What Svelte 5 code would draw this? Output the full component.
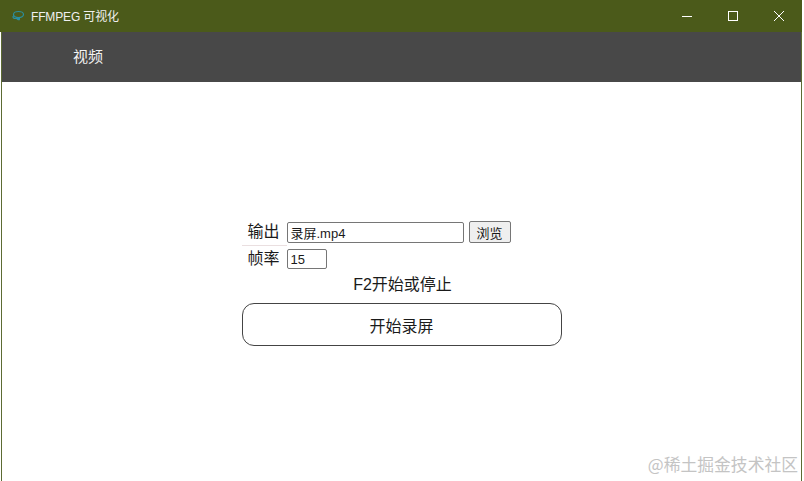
<script>
	let output = '录屏.mp4';
	let fps = '15';
</script>

<div class="page">
	<div class="window">
		<header class="titlebar">
			<svg class="logo" width="14" height="12" viewBox="0 0 14 12" fill="none" stroke="#2a8fa0" stroke-width="1.2">
				<ellipse cx="7.5" cy="4.5" rx="5" ry="3" />
				<path d="M3 5.5C1 7 2 8.5 5 8.5h4M6 8.5c0 1 1 1.5 3 1" />
			</svg>
			<span class="title">FFMPEG 可视化</span>
			<div class="controls">
				<button class="ctl" aria-label="最小化">
					<svg width="12" height="12" viewBox="0 0 12 12"><path d="M1 6.5h10" stroke="#fff" /></svg>
				</button>
				<button class="ctl" aria-label="最大化">
					<svg width="12" height="12" viewBox="0 0 12 12"><rect x="1.5" y="1.5" width="9" height="9" fill="none" stroke="#fff" /></svg>
				</button>
				<button class="ctl" aria-label="关闭">
					<svg width="12" height="12" viewBox="0 0 12 12"><path d="M1 1l10 10M11 1L1 11" stroke="#fff" /></svg>
				</button>
			</div>
		</header>

		<nav class="menu"><span>视频</span></nav>

		<main class="content">
			<div class="form">
				<div class="row">
					<label for="output" class="first">输出</label>
					<input id="output" class="path" type="text" bind:value={output} />
					<button class="browse">浏览</button>
				</div>
				<div class="row second">
					<label for="fps">帧率</label>
					<input id="fps" class="fps" type="text" bind:value={fps} />
				</div>
				<p class="hint">F2开始或停止</p>
				<button class="start">开始录屏</button>
			</div>
		</main>

		<div class="watermark">@稀土掘金技术社区</div>
	</div>
</div>

<style>
	:global(body) {
		margin: 0;
		background: #fff;
	}

	.page {
		width: 804px;
		height: 481px;
	}

	.window {
		position: relative;
		box-sizing: border-box;
		width: 801px;
		height: 481px;
		margin-left: 1px;
		display: flex;
		flex-direction: column;
		border-left: 1px solid #5c6b33;
		border-right: 1px solid #5c6b33;
		font-family: "Liberation Sans", "Noto Sans CJK SC", sans-serif;
		color: #1a1a1a;
	}

	.titlebar {
		height: 32px;
		flex: none;
		display: flex;
		align-items: center;
		padding-bottom: 2px;
		box-sizing: border-box;
		margin-left: -2px;
		margin-right: -1px;
		background: #4b5a1a;
		color: #f0f0f0;
		font-size: 12px;
	}

	.logo {
		margin-left: 11px;
		margin-right: 6px;
		margin-top: 2px;
	}

	.title {
		letter-spacing: -0.15px;
	}

	.controls {
		margin-left: auto;
		display: flex;
		margin-top: 2px;
	}

	.ctl {
		width: 46px;
		height: 32px;
		padding: 0;
		border: none;
		background: none;
		display: flex;
		align-items: center;
		justify-content: center;
	}

	.menu {
		height: 50px;
		flex: none;
		box-sizing: border-box;
		display: flex;
		align-items: center;
		padding: 0 0 3px 71px;
		background: #484848;
		color: #f2f2f2;
		font-size: 15px;
	}

	.content {
		flex: 1;
		display: flex;
		justify-content: center;
		padding: 137px 0 0;
	}

	.form {
		width: 320px;
		display: flex;
		flex-direction: column;
	}

	.row {
		display: flex;
		align-items: center;
		height: 26px;
	}

	.second {
		padding-top: 1px;
	}

	label {
		width: 45px;
		box-sizing: border-box;
		padding-right: 7px;
		text-align: right;
		font-size: 16px;
		line-height: 26px;
	}

	.first {
		border-bottom: 1px solid #eadfe0;
	}

	input {
		box-sizing: border-box;
		height: 21px;
		padding: 0 3px;
		border: 1px solid #767676;
		border-radius: 2px;
		font: 13px "Liberation Sans", "Noto Sans CJK SC", sans-serif;
		color: #1a1a1a;
	}

	.path {
		width: 177px;
	}

	.fps {
		width: 40px;
		height: 20px;
	}

	.browse {
		box-sizing: border-box;
		width: 42px;
		height: 22px;
		margin-left: 5px;
		padding: 0;
		border: 1px solid #767676;
		border-radius: 2px;
		background: #efefef;
		font: 13px "Liberation Sans", "Noto Sans CJK SC", sans-serif;
		color: #1a1a1a;
	}

	.hint {
		margin: 1px 0 0;
		padding-left: 2px;
		text-align: center;
		font-size: 16px;
		line-height: 24px;
	}

	.start {
		box-sizing: border-box;
		height: 43px;
		margin-top: 6px;
		border: 1px solid #444;
		border-radius: 12px;
		background: #fff;
		font: 16px "Liberation Sans", "Noto Sans CJK SC", sans-serif;
		color: #1a1a1a;
	}

	.watermark {
		position: absolute;
		right: 3px;
		bottom: 5px;
		font-family: "Noto Sans CJK SC", sans-serif;
		font-size: 16.8px;
		color: #c4c4c4;
	}
</style>
